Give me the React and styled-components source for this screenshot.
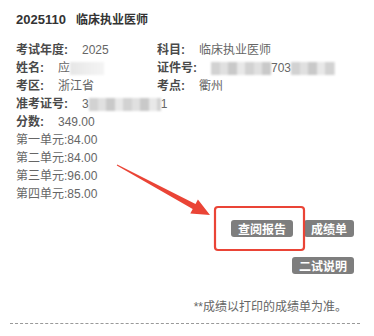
import React from 'react'
import styled, { createGlobalStyle } from 'styled-components';

const GlobalStyle = createGlobalStyle`
  body {
    margin: 0;
    background: #fff;
    font-family: "Liberation Sans", "Noto Sans CJK SC", sans-serif;
  }
`;

const info = [
  { label: '考试年度:', value: ['2025'] },
  { label: '科目:', value: ['临床执业医师'] },
  { label: '姓名:', value: ['应', { w: 34, light: true }] },
  { label: '证件号:', value: [{ w: 60 }, '703', { w: 44 }] },
  { label: '考区:', value: ['浙江省'] },
  { label: '考点:', value: ['衢州'] },
  { label: '准考证号:', value: ['3', { w: 72 }, '1'], full: true },
  { label: '分数:', value: ['349.00'], full: true },
];

const units = ['第一单元:84.00', '第二单元:84.00', '第三单元:96.00', '第四单元:85.00'];

const App = () => {
  return (
    <Card>
      <GlobalStyle />
      <Title><span>2025110</span>临床执业医师</Title>
      <InfoGrid>
        {info.map((item, index) => {
          return (
            <Field key={index} $full={item.full}>
              <Label>{item.label}</Label>
              <Value>
                {item.value.map((part, i) =>
                  typeof part === 'string'
                    ? <span key={i}>{part}</span>
                    : <Mosaic key={i} $w={part.w} $light={part.light} />
                )}
              </Value>
            </Field>
          )
        })}
      </InfoGrid>
      <Units>
        {units.map((u) => <div key={u}>{u}</div>)}
      </Units>
      <Actions>
        <ActionRow>
          <Btn type="button">查阅报告</Btn>
          <Btn type="button">成绩单</Btn>
        </ActionRow>
        <ActionRow>
          <Btn type="button">二试说明</Btn>
        </ActionRow>
      </Actions>
      <Footer>**成绩以打印的成绩单为准。</Footer>
      <Annotation width="374" height="336" viewBox="0 0 374 336">
        <rect x="215" y="207" width="89" height="43" rx="3" fill="none" stroke="#ea4436" strokeWidth="2.2" />
        <polygon
          points="116.8,165.4 192.7,209.1 190.3,213.5 210,215 197.9,199.5 195.5,203.9 117.2,164.6"
          fill="#ea4436"
        />
      </Annotation>
    </Card>
  )
}

const Card = styled.div`
  position: relative;
  width: 374px;
  height: 336px;
  box-sizing: border-box;
  padding: 11px 14px 0 10px;
  font-size: 12px;
  line-height: 18px;
  color: #666;
`;

const Title = styled.div`
  padding-left: 6px;
  font-weight: bold;
  color: #333;
  span {
    font-size: 13px;
    margin-right: 10px;
  }
`;

const InfoGrid = styled.div`
  margin-top: 12px;
  padding-left: 6px;
  display: grid;
  grid-template-columns: 141px 1fr;
  grid-auto-rows: 18px;
`;

const Field = styled.div`
  display: flex;
  align-items: center;
  white-space: nowrap;
  grid-column: ${({ $full }) => ($full ? '1 / -1' : 'auto')};
`;

const Label = styled.span`
  font-weight: bold;
  color: #4a4a4a;
  margin-right: 14px;
`;

const Value = styled.span`
  display: flex;
  align-items: center;
  color: #666;
`;

const Mosaic = styled.span`
  display: inline-block;
  width: ${({ $w }) => $w}px;
  height: 13px;
  background: ${({ $light }) =>
    $light
      ? 'linear-gradient(90deg, #e6e6e6, #eeeeee 50%, #f4f4f4)'
      : 'repeating-linear-gradient(90deg, #d2d2d2 0 9px, #e0e0e0 9px 17px, #c9c9c9 17px 26px, #e8e8e8 26px 34px)'};
  filter: blur(1.2px);
`;

const Units = styled.div`
  padding-left: 6px;
  color: #666;
`;

const Actions = styled.div`
  margin-top: 17px;
  padding-right: 6px;
  display: flex;
  flex-direction: column;
  align-items: flex-end;
  gap: 20px;
`;

const ActionRow = styled.div`
  display: flex;
  gap: 11px;
`;

const Btn = styled.button`
  height: 17px;
  padding: 0 7px;
  border: none;
  border-radius: 3px;
  background-color: #7e7e7e;
  color: #fff;
  font-family: "Noto Sans CJK SC", sans-serif;
  font-size: 12px;
  font-weight: bold;
  line-height: 17px;
  cursor: pointer;
`;

const Footer = styled.div`
  margin-top: 24px;
  padding: 0 13px 7px 0;
  text-align: right;
  color: #666;
  border-bottom: 1px dashed #999;
`;

const Annotation = styled.svg`
  position: absolute;
  top: 0;
  left: 0;
  pointer-events: none;
`;

export default App
